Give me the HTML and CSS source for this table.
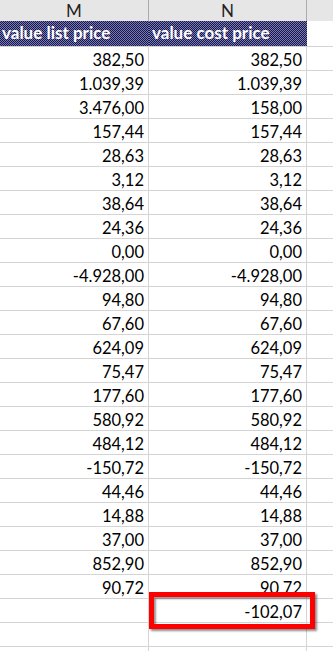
FILE: index.html
```html
<!DOCTYPE html>
<html>
<head>
<meta charset="utf-8">
<link rel="stylesheet" href="styles.css">
</head>
<body>
<div class="sheet">
  <div class="row colhead">
    <div class="cell m">M</div>
    <div class="cell n">N</div>
    <div class="cell o"></div>
  </div>
  <div class="row title">
    <div class="cell m">value list price</div>
    <div class="cell n">value cost price</div>
    <div class="cell o"></div>
  </div>
  <div class="row"><div class="cell m">382,50</div><div class="cell n">382,50</div><div class="cell o"></div></div>
  <div class="row"><div class="cell m">1.039,39</div><div class="cell n">1.039,39</div><div class="cell o"></div></div>
  <div class="row"><div class="cell m">3.476,00</div><div class="cell n">158,00</div><div class="cell o"></div></div>
  <div class="row"><div class="cell m">157,44</div><div class="cell n">157,44</div><div class="cell o"></div></div>
  <div class="row"><div class="cell m">28,63</div><div class="cell n">28,63</div><div class="cell o"></div></div>
  <div class="row"><div class="cell m">3,12</div><div class="cell n">3,12</div><div class="cell o"></div></div>
  <div class="row"><div class="cell m">38,64</div><div class="cell n">38,64</div><div class="cell o"></div></div>
  <div class="row"><div class="cell m">24,36</div><div class="cell n">24,36</div><div class="cell o"></div></div>
  <div class="row"><div class="cell m">0,00</div><div class="cell n">0,00</div><div class="cell o"></div></div>
  <div class="row"><div class="cell m">-4.928,00</div><div class="cell n">-4.928,00</div><div class="cell o"></div></div>
  <div class="row"><div class="cell m">94,80</div><div class="cell n">94,80</div><div class="cell o"></div></div>
  <div class="row"><div class="cell m">67,60</div><div class="cell n">67,60</div><div class="cell o"></div></div>
  <div class="row"><div class="cell m">624,09</div><div class="cell n">624,09</div><div class="cell o"></div></div>
  <div class="row"><div class="cell m">75,47</div><div class="cell n">75,47</div><div class="cell o"></div></div>
  <div class="row"><div class="cell m">177,60</div><div class="cell n">177,60</div><div class="cell o"></div></div>
  <div class="row"><div class="cell m">580,92</div><div class="cell n">580,92</div><div class="cell o"></div></div>
  <div class="row"><div class="cell m">484,12</div><div class="cell n">484,12</div><div class="cell o"></div></div>
  <div class="row"><div class="cell m">-150,72</div><div class="cell n">-150,72</div><div class="cell o"></div></div>
  <div class="row"><div class="cell m">44,46</div><div class="cell n">44,46</div><div class="cell o"></div></div>
  <div class="row"><div class="cell m">14,88</div><div class="cell n">14,88</div><div class="cell o"></div></div>
  <div class="row"><div class="cell m">37,00</div><div class="cell n">37,00</div><div class="cell o"></div></div>
  <div class="row"><div class="cell m">852,90</div><div class="cell n">852,90</div><div class="cell o"></div></div>
  <div class="row"><div class="cell m">90,72</div><div class="cell n">90,72</div><div class="cell o"></div></div>
  <div class="row"><div class="cell m"></div><div class="cell n">-102,07</div><div class="cell o"></div></div>
  <div class="row"><div class="cell m"></div><div class="cell n"></div><div class="cell o"></div></div>
  <div class="row"><div class="cell m"></div><div class="cell n"></div><div class="cell o"></div></div>
  <div class="highlight"></div>
</div>
</body>
</html>
```
FILE: styles.css
```css
html, body {
  margin: 0;
  padding: 0;
  background: #ffffff;
}
body {
  width: 333px;
  height: 651px;
  overflow: hidden;
}
.sheet {
  position: relative;
  font-family: Lato, "Open Sans", "Liberation Sans", sans-serif;
  font-size: 16.5px;
  color: #000;
}
.row {
  display: flex;
  height: 24px;
}
.cell {
  box-sizing: border-box;
  height: 100%;
  border-right: 1px solid #d4d4d4;
  border-bottom: 1px solid #d4d4d4;
  display: flex;
  align-items: flex-end;
  justify-content: flex-end;
  padding: 0 4px 1px 0;
  line-height: 18px;
  white-space: nowrap;
}
.cell.m { width: 149px; }
.cell.n { width: 158px; }
.cell.o { flex: 1; border-right: none; }

.colhead {
  height: 21px;
  background: #e6e6e6;
}
.colhead .cell {
  border-right: 1px solid #ababab;
  border-bottom: none;
  justify-content: center;
  align-items: center;
  padding: 0;
  color: #222222;
  font-size: 17px;
}
.colhead .cell.o { border-right: none; }

.title {
  height: 26px;
}
.title .cell.m,
.title .cell.n {
  border-right: none;
  border-bottom: 1px solid #d4d4d4;
  background: repeating-conic-gradient(#161648 0 25%, #7a7ab4 0 50%) 0 0 / 2px 2px;
  color: #ffffff;
  font-size: 17px;
  font-weight: 700;
  justify-content: flex-start;
  padding: 0 0 4px 2px;
}
.title .cell.n { padding-left: 3px; }

.highlight {
  position: absolute;
  left: 149px;
  top: 592px;
  width: 166px;
  height: 37px;
  box-sizing: border-box;
  border: 5px solid #ff0000;
  box-shadow: 2px 2px 2px rgba(0, 0, 0, 0.45), inset 2px 2px 2px rgba(0, 0, 0, 0.4);
}
```
